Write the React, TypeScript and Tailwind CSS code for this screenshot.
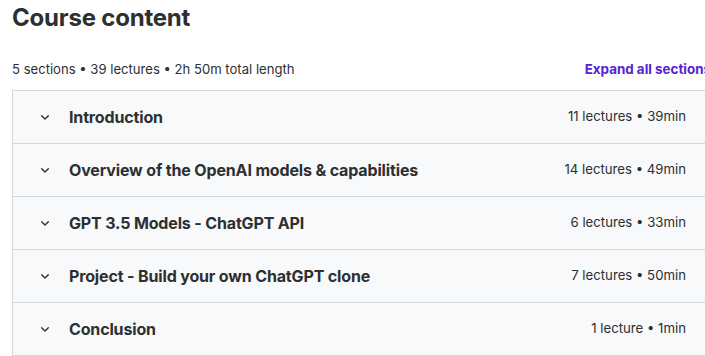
import React from "react";

const sections = [
  { title: "Introduction", meta: "11 lectures • 39min" },
  { title: "Overview of the OpenAI models & capabilities", meta: "14 lectures • 49min" },
  { title: "GPT 3.5 Models - ChatGPT API", meta: "6 lectures • 33min" },
  { title: "Project - Build your own ChatGPT clone", meta: "7 lectures • 50min" },
  { title: "Conclusion", meta: "1 lecture • 1min" },
];

function Chevron() {
  return (
    <svg width="16" height="16" viewBox="0 0 24 24" fill="none" stroke="#2d2f31" strokeWidth="2" strokeLinecap="round" strokeLinejoin="round">
      <path d="M7 10l5 5 5-5" />
    </svg>
  );
}

export default function App() {
  return (
    <div className="w-[705px] h-[356px] overflow-hidden bg-white text-[#2d2f31]" style={{ fontFamily: "Inter, 'Noto Sans', sans-serif" }}>
      <div className="w-[711px] pl-3">
        <h2 className="text-[24px] font-bold leading-[36px] tracking-[-0.2px]">Course content</h2>
        <div className="mt-[24px] flex items-center justify-between h-[19px]">
          <span className="text-[13.1px] leading-[19px]">5 sections • 39 lectures • 2h 50m total length</span>
          <span className="text-[13.4px] font-bold text-[#5624d0] leading-[19px]">Expand all sections</span>
        </div>
        <div className="mt-[11px] border border-[#d1d7dc] w-[699px]">
          {sections.map((s, i) => (
            <div key={i} className={`flex items-center bg-[#f7f9fa] px-6 ${i > 0 ? "h-[53px] border-t border-[#d1d7dc]" : "h-[52px]"}`}>
              <Chevron />
              <span className="ml-4 text-[16px] font-bold flex-1 tracking-[-0.15px]">{s.title}</span>
              <span className="text-[13.2px]">{s.meta}</span>
            </div>
          ))}
        </div>
      </div>
    </div>
  );
}
